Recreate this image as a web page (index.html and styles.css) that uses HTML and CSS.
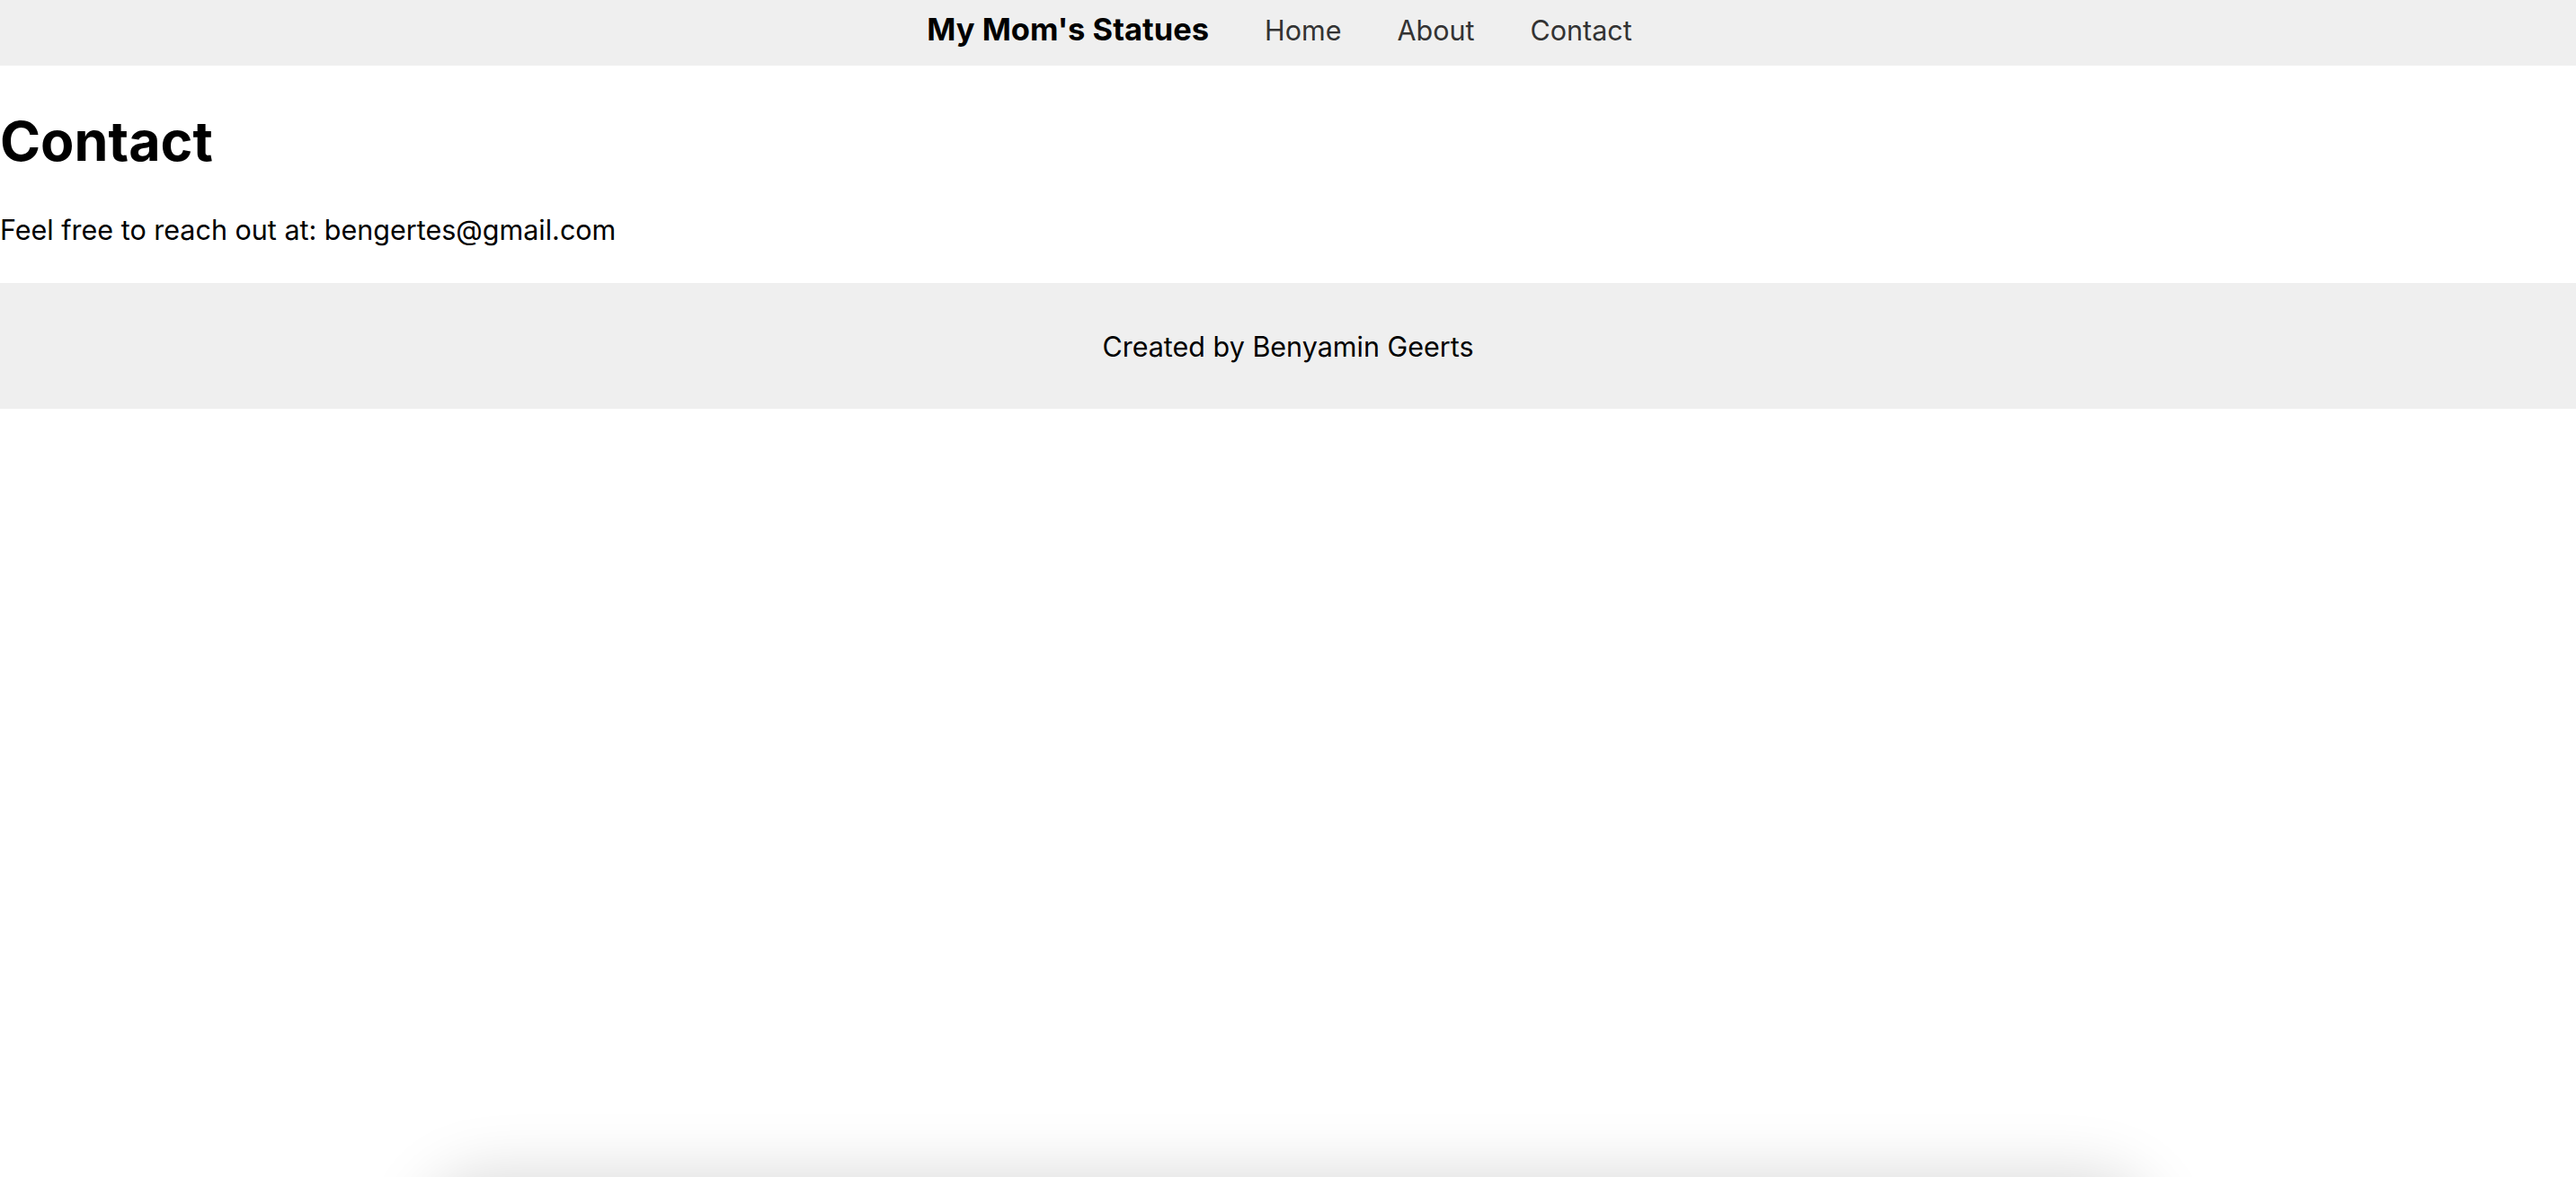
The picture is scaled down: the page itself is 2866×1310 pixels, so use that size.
FILE: index.html
```html
<!DOCTYPE html>
<html lang="en">
<head>
<meta charset="utf-8">
<title>Contact - My Mom's Statues</title>
<link rel="stylesheet" href="styles.css">
</head>
<body>
<nav class="navbar">
  <a class="brand" href="#">My Mom's Statues</a>
  <a class="nav-link" href="#">Home</a>
  <a class="nav-link" href="#">About</a>
  <a class="nav-link" href="#">Contact</a>
</nav>
<main class="content">
  <h1 class="title">Contact</h1>
  <p class="lead">Feel free to reach out at: bengertes@gmail.com</p>
</main>
<footer class="footer">
  <p class="footer-text">Created by Benyamin Geerts</p>
</footer>
<div class="dock-shadow"></div>
</body>
</html>
```

FILE: styles.css
```css
html, body {
  margin: 0;
  padding: 0;
  background: #ffffff;
}

body {
  font-family: "Inter", "Liberation Sans", sans-serif;
  color: #000000;
  overflow: hidden;
}

.navbar {
  box-sizing: border-box;
  height: 73px;
  background: #efefef;
  display: flex;
  justify-content: center;
  align-items: baseline;
  gap: 62px;
  padding-top: 13px;
  padding-right: 19px;
}

.brand {
  font-size: 34.5px;
  line-height: 40px;
  font-weight: 700;
  color: #000000;
  text-decoration: none;
}

.nav-link {
  font-size: 30.5px;
  line-height: 40px;
  font-weight: 400;
  color: #333333;
  text-decoration: none;
}

.content {
  padding: 0;
}

.title {
  margin: 47px 0 43px 0;
  font-size: 61px;
  line-height: 74px;
  font-weight: 700;
}

.lead {
  margin: 0 0 40px 0;
  font-size: 30.5px;
  line-height: 38px;
}

.footer {
  box-sizing: border-box;
  height: 140px;
  background: #efefef;
  padding-top: 52px;
  text-align: center;
}

.footer-text {
  margin: 0;
  font-size: 30.5px;
  line-height: 38px;
}

.dock-shadow {
  position: fixed;
  left: 50%;
  transform: translateX(-50%);
  bottom: -120px;
  width: 1880px;
  height: 100px;
  border-radius: 50px;
  background: #ffffff;
  box-shadow: 0 0 70px 24px rgba(0, 0, 0, 0.15);
}
```
